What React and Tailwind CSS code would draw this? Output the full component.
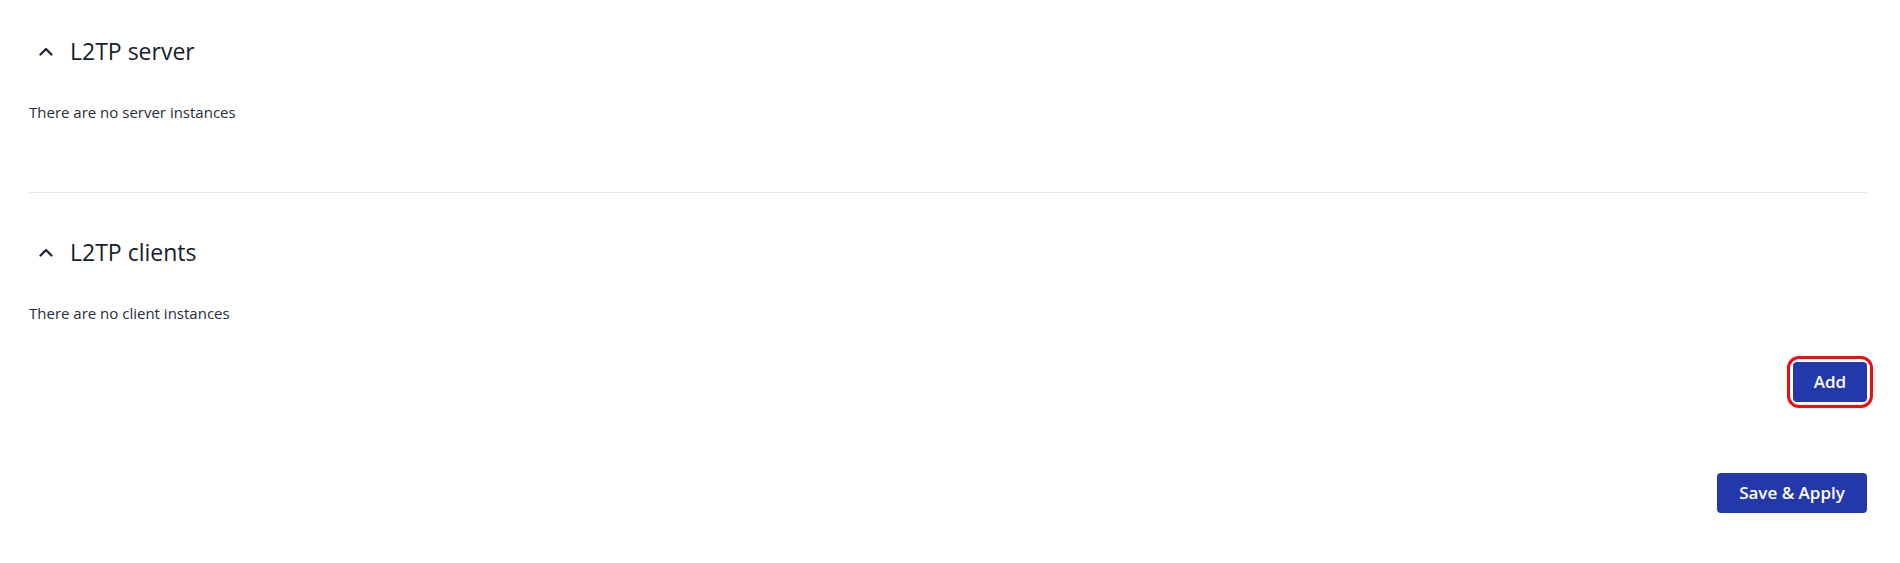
import React from 'react';

function Chevron() {
  return (
    <svg width="14" height="9" viewBox="0 0 14 9" className="ml-[10px] mr-[17px] shrink-0">
      <polyline points="1.5,7.5 7,2 12.5,7.5" fill="none" stroke="#1f2533" strokeWidth="2.3" strokeLinecap="round" strokeLinejoin="round" />
    </svg>
  );
}

function SectionHeader({ title }) {
  return (
    <div className="flex items-center h-[32px]">
      <Chevron />
      <h2 className="text-[23px] leading-[32px] font-medium text-[#161d2c]">{title}</h2>
    </div>
  );
}

export default function App() {
  return (
    <div className="w-[1900px] h-[563px] bg-white pl-[29px] pr-[33px] pt-[35px]" style={{ fontFamily: '"Open Sans", "Noto Sans", sans-serif' }}>
      {/* L2TP server */}
      <SectionHeader title="L2TP server" />
      <p className="mt-[35px] text-[15px] leading-[20px] text-[#262c3a]">There are no server instances</p>

      <div className="mt-[70px] h-px bg-[#e4e7ec]" />

      {/* L2TP clients */}
      <div className="mt-[43px]">
        <SectionHeader title="L2TP clients" />
      </div>
      <p className="mt-[35px] text-[15px] leading-[20px] text-[#262c3a]">There are no client instances</p>

      <div className="flex justify-end mt-[39px]">
        <div className="rounded-[6px] outline-[3px] outline-[#ee0d0d] outline outline-offset-[3px]">
          <button className="w-[74px] h-[40px] rounded-[4px] bg-[#2339ab] text-white text-[17px] font-semibold">Add</button>
        </div>
      </div>

      <div className="flex justify-end mt-[71px]">
        <button className="w-[150px] h-[40px] rounded-[4px] bg-[#2339ab] text-white text-[17px] font-semibold">Save &amp; Apply</button>
      </div>
    </div>
  );
}
